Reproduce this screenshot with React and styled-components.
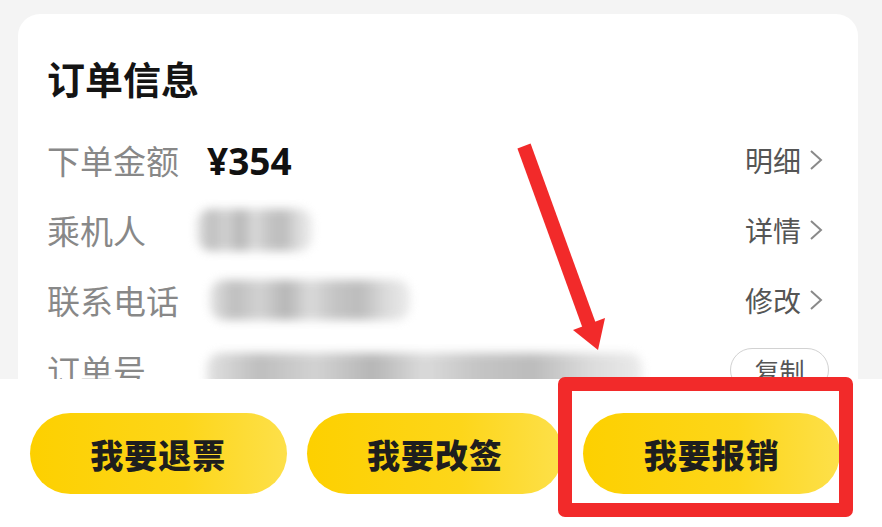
import React from 'react'
import styled, { createGlobalStyle } from 'styled-components'

const GlobalStyle = createGlobalStyle`
    html, body {
        margin: 0;
        padding: 0;
        background: #f4f4f4;
        overflow: hidden;
        font-family: "Noto Sans CJK SC", "Noto Sans", sans-serif;
    }
`

const rows = [
    { label: '下单金额', price: '¥354', link: '明细' },
    { label: '乘机人', blur: { w: 115, h: 42, ml: -10 }, link: '详情' },
    { label: '联系电话', blur: { w: 200, h: 40, ml: 3 }, link: '修改' },
    { label: '订单号', blur: { w: 435, h: 40, ml: 0, dy: 6 }, copy: true },
]

function Chevron() {
    return (
        <svg width="14" height="22" viewBox="0 0 14 22">
            <polyline points="2,2 12,11 2,20" fill="none" stroke="#8a8a8a" strokeWidth="2" />
        </svg>
    )
}

function App() {
    return (
        <Page>
            <GlobalStyle />
            <Card>
                <Title>订单信息</Title>
                <List>
                    {rows.map((r) => (
                        <Row key={r.label}>
                            <Label>{r.label}</Label>
                            <Value>
                                {r.price && <Price>{r.price}</Price>}
                                {r.blur && (
                                    <Blurred
                                        style={{ width: r.blur.w, height: r.blur.h, marginLeft: r.blur.ml, marginTop: r.blur.dy || 0 }}
                                    />
                                )}
                            </Value>
                            {r.link && (
                                <Link>
                                    {r.link}
                                    <Chevron />
                                </Link>
                            )}
                            {r.copy && <CopyButton>复制</CopyButton>}
                        </Row>
                    ))}
                </List>
            </Card>

            <ActionBar>
                <ActionButton>我要退票</ActionButton>
                <ActionButton>我要改签</ActionButton>
                <ActionButton>我要报销</ActionButton>
            </ActionBar>

            <Highlight />
            <Arrow viewBox="0 0 882 527">
                <line x1="524" y1="146" x2="589" y2="325" stroke="#f22a2a" strokeWidth="14" />
                <polygon points="573,330 605,318 598,350" fill="#f22a2a" />
            </Arrow>
        </Page>
    )
}

export default App

const Page = styled.div`
    position: relative;
    width: 882px;
    height: 527px;
    padding-top: 14px;
    box-sizing: border-box;
    overflow: hidden;
`

const Card = styled.div`
    margin: 0 24px 0 18px;
    background: #fff;
    border-radius: 22px;
    padding: 42px 35px 60px 29px;
`

const Title = styled.h2`
    margin: 0;
    font-size: 38px;
    line-height: 44px;
    font-weight: 700;
    color: #141414;
`

const List = styled.div`
    margin-top: 25px;
    display: flex;
    flex-direction: column;
`

const Row = styled.div`
    height: 70px;
    display: flex;
    align-items: center;
`

const Label = styled.span`
    width: 160px;
    flex-shrink: 0;
    font-size: 33px;
    color: #888;
`

const Value = styled.div`
    flex: 1;
    display: flex;
    align-items: center;
`

const Price = styled.span`
    font-family: "Noto Sans", "Liberation Sans", sans-serif;
    font-size: 37px;
    font-weight: 700;
    color: #111;
`

const Blurred = styled.div`
    border-radius: 14px;
    background:
        linear-gradient(90deg, #d8d8d8 0%, #a9a9a9 12%, #c4c4c4 25%, #9e9e9e 38%, #cfcfcf 50%, #b2b2b2 62%, #a6a6a6 75%, #d0d0d0 88%, #e4e4e4 100%);
    filter: blur(5px);
    opacity: 0.75;
`

const Link = styled.span`
    display: flex;
    align-items: center;
    gap: 8px;
    font-size: 28px;
    color: #555;
`

const CopyButton = styled.span`
    box-sizing: border-box;
    width: 99px;
    height: 44px;
    margin-right: -6px;
    border: 1.5px solid #d2d2d2;
    border-radius: 22px;
    display: flex;
    align-items: center;
    justify-content: center;
    font-size: 25px;
    color: #555;
`

const ActionBar = styled.div`
    position: absolute;
    left: 0;
    right: 0;
    bottom: 0;
    height: 148px;
    background: #fff;
    box-sizing: border-box;
    padding: 34px 42px 0 30px;
    display: grid;
    grid-template-columns: 1fr 1fr 1fr;
    gap: 20px;
    align-items: start;
`

const ActionButton = styled.button`
    height: 81px;
    border: none;
    border-radius: 41px;
    background: linear-gradient(90deg, #fdd000 0%, #fdd61a 60%, #fde04a 100%);
    font-family: "Noto Sans CJK SC", sans-serif;
    font-size: 33px;
    font-weight: 900;
    color: #1e1e1e;
    letter-spacing: 1px;
`

const Highlight = styled.div`
    position: absolute;
    left: 558px;
    top: 377px;
    width: 295px;
    height: 140px;
    box-sizing: border-box;
    border: 14px solid #f22a2a;
    border-radius: 7px;
    pointer-events: none;
`

const Arrow = styled.svg`
    position: absolute;
    left: 0;
    top: 0;
    width: 882px;
    height: 527px;
    pointer-events: none;
`
